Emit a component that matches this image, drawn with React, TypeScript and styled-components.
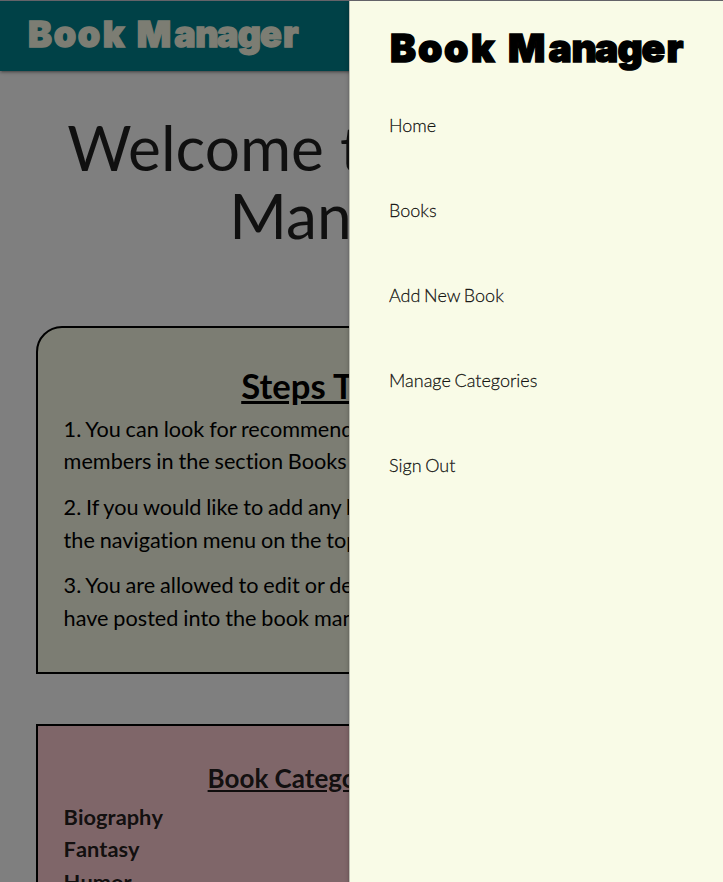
import React from "react";
import styled, { createGlobalStyle } from "styled-components";

const GlobalStyle = createGlobalStyle`
  *, *::before, *::after { box-sizing: border-box; }
  html, body { margin: 0; height: 882px; overflow: hidden; background: #fff; }
  body {
    font-family: Lato, sans-serif;
    font-variant-ligatures: none;
    color: rgba(0, 0, 0, 0.87);
    line-height: 1.5;
  }
`;

const Window = styled.div`
  position: relative;
  height: 882px;
  overflow: hidden;
  border-top: 1px solid #646369;
`;

const Navbar = styled.header`
  height: 70px;
  padding-left: 28px;
  background: #00838f;
  box-shadow: 0 2px 2px 0 rgba(0, 0, 0, 0.14), 0 3px 1px -2px rgba(0, 0, 0, 0.12),
    0 1px 5px 0 rgba(0, 0, 0, 0.2);
`;

const Logo = styled.svg`
  display: block;
  overflow: visible;
`;

const LogoText = styled.text`
  font-family: Inter, sans-serif;
  font-size: 39px;
  font-weight: 900;
  stroke-width: 1.4px;
`;

const Page = styled.main`
  padding: 0 36px;
`;

const Title = styled.h1`
  margin: 42px 0 77px;
  font-size: 62.2px;
  line-height: 68px;
  font-weight: 400;
  text-align: center;
  white-space: nowrap;
`;

const TitleLine = styled.span<{ $before?: number; $after?: number }>`
  display: block;
  padding-left: ${(p) => p.$before ?? 0}px;
  padding-right: ${(p) => p.$after ?? 0}px;
`;

const Card = styled.section<{ $tone: string; $rounded?: boolean; $height: number }>`
  height: ${(p) => p.$height}px;
  margin-bottom: 50px;
  padding: 26px 25.6px;
  border: 2px solid #000;
  border-radius: ${(p) => (p.$rounded ? "26px 26px 0 0" : "0")};
  background: ${(p) => p.$tone};
`;

const StepsTitle = styled.h2`
  margin: 6px 0 0.7px;
  padding-right: 1px;
  color: #000;
  font-size: 34.7px;
  line-height: 52px;
  font-weight: 700;
  text-align: center;
  text-decoration: underline;
`;

const Step = styled.p`
  margin: 0 0 13px;
  color: #000;
  font-size: 21.67px;
  line-height: 32.5px;
  word-spacing: -0.7px;
  white-space: nowrap;

  &:first-of-type { margin-bottom: 13.6px; }
`;

const CategoriesTitle = styled.h3`
  margin: 7px 0 2.5px;
  font-size: 26px;
  line-height: 39px;
  font-weight: 700;
  text-align: center;
  text-decoration: underline;
`;

const Category = styled.div`
  font-size: 21.8px;
  line-height: 32.5px;
  font-weight: 700;
  font-kerning: none;
`;

const Overlay = styled.div`
  position: absolute;
  inset: 0;
  background: rgba(0, 0, 0, 0.5);
`;

const Drawer = styled.aside`
  position: absolute;
  top: 0;
  right: 0;
  bottom: 0;
  width: 374px;
  padding-left: 40px;
  border-left: 1px solid #c0c1b5;
  background: #f9fbe7;
  box-shadow: 0 2px 2px 0 rgba(0, 0, 0, 0.14), 0 3px 1px -2px rgba(0, 0, 0, 0.12),
    0 1px 5px 0 rgba(0, 0, 0, 0.2);
`;

const DrawerLinks = styled.nav`
  display: flex;
  flex-direction: column;
  align-items: flex-start;
  margin-left: -1px;
`;

const DrawerLink = styled.a`
  padding: 29px 0;
  color: rgba(0, 0, 0, 0.87);
  font-size: 18px;
  line-height: 27px;
  font-weight: 300;
  word-spacing: -1.2px;
  -webkit-text-stroke: 0.3px rgba(0, 0, 0, 0.87);
  text-decoration: none;
`;

const steps = [
  ["1. You can look for recommended books by other", "members in the section Books"],
  ["2. If you would like to add any book, please use", "the navigation menu on the top right."],
  ["3. You are allowed to edit or delete books you", "have posted into the book manager."],
];

const categories = ["Biography", "Fantasy", "Humor"];

const links = ["Home", "Books", "Add New Book", "Manage Categories", "Sign Out"];

type BrandProps = { width: number; color: string; height: number; baseline: number };

const letterStarts = "0 28 54 81 108 118 158.5 181.5 205 227.5 251.5 276.5";

function Brand({ width, color, height, baseline }: BrandProps) {
  const scale = width / 295;
  return (
    <Logo width={width} height={height}>
      <g transform={`translate(0 ${baseline}) scale(${scale})`}>
        <LogoText x={letterStarts} y="0" fill={color} stroke={color}>Book Manager</LogoText>
      </g>
    </Logo>
  );
}

export default function App() {
  return (
    <>
      <GlobalStyle />
      <Window>
        <Navbar>
          <Brand width={272} height={70} baseline={46} color="#f9fbe7" />
        </Navbar>
        <Page>
          <Title>
            <TitleLine $before={5}>Welcome to the Book</TitleLine>
            <TitleLine $after={7}>Manager!</TitleLine>
          </Title>
          <Card $tone="#f9fbe7" $height={348} $rounded>
            <StepsTitle>Steps To Follow</StepsTitle>
            {steps.map(([first, second]) => (
              <Step key={first}>{first}<br />{second}</Step>
            ))}
          </Card>
          <Card $tone="#ffcdd2" $height={300}>
            <CategoriesTitle>Book Categories Available:</CategoriesTitle>
            {categories.map((name) => <Category key={name}>{name}</Category>)}
          </Card>
        </Page>
        <Overlay />
        <Drawer>
          <Brand width={295} height={82} baseline={60.5} color="#000" />
          <DrawerLinks>
            {links.map((label) => <DrawerLink key={label}>{label}</DrawerLink>)}
          </DrawerLinks>
        </Drawer>
      </Window>
    </>
  );
}
